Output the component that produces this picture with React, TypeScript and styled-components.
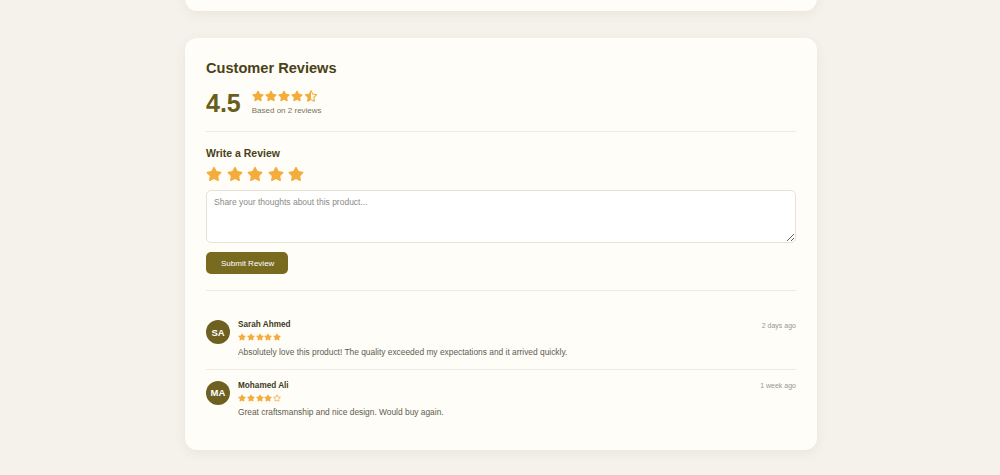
import React from 'react';
import styled, { createGlobalStyle } from 'styled-components';
import { FaStar, FaStarHalfAlt, FaRegStar } from 'react-icons/fa';

const GlobalStyle = createGlobalStyle`
  body {
    margin: 0;
    background: #f5f2eb;
    font-family: "Liberation Sans", Arial, sans-serif;
  }
`

const Page = styled.main`
  display: flex;
  flex-direction: column;
  align-items: center;
  gap: 27px;
  margin-top: -169px;
  padding: 0 0 26px 2px;
`

const Card = styled.section<{ $height?: number }>`
  box-sizing: border-box;
  width: 632px;
  height: ${p => (p.$height ? `${p.$height}px` : 'auto')};
  background: #fffdf7;
  border-radius: 12px;
  box-shadow: 0 3px 12px rgba(90, 70, 20, 0.07);
  padding: 21px;
`

const Title = styled.h2`
  margin: 0 0 12px;
  font-size: 14.6px;
  line-height: 18px;
  font-weight: 700;
  color: #4a4119;
`

const Summary = styled.div`
  display: flex;
  align-items: center;
  gap: 11px;
  padding-bottom: 14px;
  border-bottom: 1px solid #efeadf;
`

const Average = styled.span`
  font-size: 25px;
  line-height: 28px;
  font-weight: 700;
  color: #6b5d1c;
`

const Stars = styled.div<{ $size: number; $gap: number }>`
  display: flex;
  gap: ${p => p.$gap}px;
  color: #f4ad3d;
  svg {
    width: ${p => p.$size}px;
    height: ${p => p.$size}px;
    display: block;
  }
`

const Based = styled.div`
  margin-top: 4px;
  font-size: 8px;
  line-height: 10px;
  color: #7a7459;
`

const Form = styled.div`
  padding: 14px 0 16px;
  border-bottom: 1px solid #efeadf;
`

const FormTitle = styled.h3`
  margin: 0 0 6px;
  font-size: 10.5px;
  line-height: 14px;
  font-weight: 700;
  color: #4a4119;
`

const TextBox = styled.textarea`
  display: block;
  box-sizing: border-box;
  width: 100%;
  height: 53px;
  margin-top: 8px;
  padding: 6px 7px;
  border: 1px solid #e7e3d8;
  border-radius: 5px;
  background: #fff;
  font-family: "Liberation Sans", Arial, sans-serif;
  font-size: 8.5px;
  line-height: 10px;
  color: #444;
  resize: vertical;
  outline: none;
  &::placeholder {
    color: #8b8b85;
  }
`

const SubmitButton = styled.button`
  margin-top: 9px;
  height: 22px;
  padding: 0 14px 0 15px;
  border: none;
  border-radius: 5px;
  background: #786a1f;
  color: #fff;
  font-family: "Liberation Sans", Arial, sans-serif;
  font-size: 8px;
  cursor: pointer;
`

const ReviewList = styled.ul`
  list-style: none;
  margin: 18px 0 0;
  padding: 0;
`

const ReviewItem = styled.li`
  display: flex;
  align-items: flex-start;
  gap: 8px;
  padding: 11px 0;
  &:not(:last-child) {
    border-bottom: 1px solid #efeadf;
  }
`

const Avatar = styled.div`
  flex: none;
  width: 24px;
  height: 24px;
  border-radius: 50%;
  background: #6e6020;
  color: #fff;
  font-size: 9.5px;
  font-weight: 700;
  display: flex;
  align-items: center;
  justify-content: center;
`

const ReviewBody = styled.div`
  flex: 1;
`

const ReviewHead = styled.div`
  display: flex;
  justify-content: space-between;
  align-items: center;
  margin-bottom: 3px;
`

const Name = styled.span`
  font-size: 8.2px;
  line-height: 10px;
  font-weight: 700;
  color: #3f3a1e;
`

const Time = styled.span`
  font-size: 7px;
  color: #9a978c;
`

const Comment = styled.p`
  margin: 5.5px 0 0;
  font-size: 8.4px;
  line-height: 11px;
  color: #5e5c51;
`

interface IReview {
  initials: string;
  name: string;
  rating: number;
  time: string;
  text: string;
}

const reviews: IReview[] = [
  {
    initials: 'SA',
    name: 'Sarah Ahmed',
    rating: 5,
    time: '2 days ago',
    text: 'Absolutely love this product! The quality exceeded my expectations and it arrived quickly.',
  },
  {
    initials: 'MA',
    name: 'Mohamed Ali',
    rating: 4,
    time: '1 week ago',
    text: 'Great craftsmanship and nice design. Would buy again.',
  },
]

const renderStars = (value: number) =>
  [1, 2, 3, 4, 5].map(i => {
    if (value >= i) return <FaStar key={i} />
    if (value >= i - 0.5) return <FaStarHalfAlt key={i} />
    return <FaRegStar key={i} />
  })

export default function App() {
  const average = reviews.reduce((s, r) => s + r.rating, 0) / reviews.length

  return (
    <>
      <GlobalStyle />
      <Page>
        <Card $height={180} />
        <Card>
          <Title>Customer Reviews</Title>
          <Summary>
            <Average>{average.toFixed(1)}</Average>
            <div>
              <Stars $size={12} $gap={1.2}>{renderStars(average)}</Stars>
              <Based>Based on {reviews.length} reviews</Based>
            </div>
          </Summary>

          <Form>
            <FormTitle>Write a Review</FormTitle>
            <Stars $size={16} $gap={4.5}>{renderStars(5)}</Stars>
            <TextBox placeholder="Share your thoughts about this product..." />
            <SubmitButton>Submit Review</SubmitButton>
          </Form>

          <ReviewList>
            {reviews.map(r => (
              <ReviewItem key={r.name}>
                <Avatar>{r.initials}</Avatar>
                <ReviewBody>
                  <ReviewHead>
                    <Name>{r.name}</Name>
                    <Time>{r.time}</Time>
                  </ReviewHead>
                  <Stars $size={8} $gap={0.8}>{renderStars(r.rating)}</Stars>
                  <Comment>{r.text}</Comment>
                </ReviewBody>
              </ReviewItem>
            ))}
          </ReviewList>
        </Card>
      </Page>
    </>
  )
}
